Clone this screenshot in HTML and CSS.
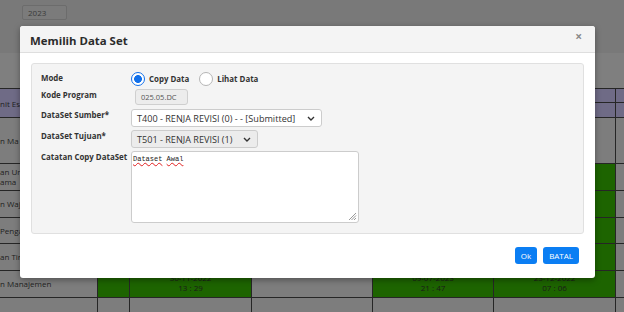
FILE: index.html
```html
<!DOCTYPE html>
<html>
<head>
<meta charset="utf-8">
<link rel="stylesheet" href="styles.css">
</head>
<body>
<div class="page">
  <div class="topbar"><div class="year">2023</div></div>
  <div class="grid">
    <div class="c hd span2">nit Es</div>
    <div class="c hd"></div><div class="c hd"></div><div class="c hd"></div><div class="c hd"></div><div class="c hd"></div><div class="c hd"></div>
    <div class="c hd"></div><div class="c hd"></div><div class="c hd"></div><div class="c hd"></div><div class="c hd"></div><div class="c hd"></div>

    <div class="c lbl">n Ma</div><div class="c"></div><div class="c"></div><div class="c"></div><div class="c"></div><div class="c"></div><div class="c"></div>
    <div class="c lbl two">an Um<br>ama</div><div class="c g"></div><div class="c g"></div><div class="c"></div><div class="c g"></div><div class="c g"></div><div class="c"></div>
    <div class="c lbl">n Waj</div><div class="c g"></div><div class="c g"></div><div class="c"></div><div class="c g"></div><div class="c g"></div><div class="c"></div>
    <div class="c lbl">Penga</div><div class="c g"></div><div class="c g"></div><div class="c"></div><div class="c g"></div><div class="c g"></div><div class="c"></div>
    <div class="c lbl">an Tin</div><div class="c g"></div><div class="c g"></div><div class="c"></div><div class="c g"></div><div class="c g"></div><div class="c"></div>
    <div class="c lbl">n Manajemen</div><div class="c g"></div><div class="c g dt">30-11-2022<br>13 : 29</div><div class="c"></div><div class="c g dt">09-07-2023<br>21 : 47</div><div class="c g dt">23-12-2022<br>07 : 06</div><div class="c"></div>
    <div class="c lbl"></div><div class="c"></div><div class="c"></div><div class="c"></div><div class="c"></div><div class="c"></div><div class="c"></div>
  </div>
</div>

<div class="modal">
  <div class="modal-header">
    <h4 class="title">Memilih Data Set</h4>
    <span class="close">×</span>
  </div>
  <div class="modal-body">
    <div class="panel">
      <div class="form">
        <div class="label">Mode</div>
        <div class="radios">
          <span class="radio on"></span><span class="rtext">Copy Data</span>
          <span class="radio off"></span><span class="rtext">Lihat Data</span>
        </div>

        <div class="label">Kode Program</div>
        <div><div class="kode">025.05.DC</div></div>

        <div class="label">DataSet Sumber*</div>
        <div><div class="select sumber"><span>T400 - RENJA REVISI (0) - - [Submitted]</span><svg class="chev" width="8" height="5" viewBox="0 0 8 5"><path d="M1 1 L4 4 L7 1" fill="none" stroke="#333" stroke-width="1.4"/></svg></div></div>

        <div class="label">DataSet Tujuan*</div>
        <div><div class="select tujuan"><span>T501 - RENJA REVISI (1)</span><svg class="chev" width="8" height="5" viewBox="0 0 8 5"><path d="M1 1 L4 4 L7 1" fill="none" stroke="#333" stroke-width="1.4"/></svg></div></div>

        <div class="label">Catatan Copy DataSet</div>
        <div>
          <div class="textarea">
            <span class="sp">Dataset</span> <span class="sp">Awal</span>
            <svg class="grip" width="9" height="9" viewBox="0 0 9 9"><path d="M8 1 L1 8 M8 3.5 L3.5 8 M8 6 L6 8" stroke="#999" stroke-width="1"/></svg>
          </div>
        </div>
      </div>
    </div>
  </div>
  <div class="modal-footer">
    <button class="btn">Ok</button>
    <button class="btn">BATAL</button>
  </div>
</div>
</body>
</html>
```
FILE: styles.css
```css
* { box-sizing: border-box; }
html, body { margin: 0; padding: 0; }
body {
  width: 624px;
  height: 312px;
  overflow: hidden;
  background: #7f7f7f;
  font-family: "Open Sans", "Liberation Sans", sans-serif;
  position: relative;
}
.page { display: flex; flex-direction: column; }
.topbar {
  height: 53px;
  background: #797979;
  padding: 5px 0 0 22px;
}
.year {
  width: 45px;
  height: 15px;
  border: 1px solid #6c6c6c;
  border-radius: 2px;
  background: #7b7b7b;
  font-size: 8px;
  line-height: 13px;
  color: #3a3a3a;
  padding-left: 5px;
}
.grid {
  margin-top: 35px;
  display: grid;
  grid-template-columns: 97px 31px 121px 120px 120px 121px 1fr;
  grid-template-rows: 13px 14px 45px 26px 26px 25px 26px 26px 26px;
  gap: 1px;
  background: #262626;
  border-top: 1px solid #262626;
}
.c {
  background-color: #7d7d7d;
  font-size: 8px;
  color: #1e1e1e;
  overflow: hidden;
  white-space: nowrap;
}
.c.hd { background-color: #6f6b86; }
.span2 { grid-row: span 2; display: flex; align-items: center; }
.lbl { display: flex; align-items: center; line-height: 10px; }
.c.g { background-color: #1d6400; }
.dt {
  text-align: center;
  line-height: 10px;
  padding-top: 2px;
  color: #1a1a1a;
}

/* modal */
.modal {
  position: absolute;
  left: 20px;
  top: 26px;
  width: 575px;
  height: 252px;
  background: #fff;
  border-radius: 3px;
  box-shadow: 0 2px 6px rgba(0,0,0,0.35);
  display: flex;
  flex-direction: column;
  overflow: hidden;
}
.modal-header {
  height: 27px;
  background: #f4f4f4;
  border-bottom: 1px solid #dedede;
  display: flex;
  align-items: center;
  justify-content: space-between;
  padding: 0 12px 0 10px;
}
.title {
  margin: 0;
  font-size: 11.4px;
  font-weight: 700;
  color: #2b2b2b;
  padding-top: 2px;
}
.close {
  font-size: 12px;
  font-weight: 700;
  color: #8a8a8a;
  line-height: 12px;
  margin-top: -4px;
  margin-right: 1px;
}
.modal-body {
  padding: 10px 11px 0 11px;
}
.panel {
  height: 171px;
  background: #f4f4f4;
  border: 1px solid #e0e0e0;
  border-radius: 3px;
  padding: 8px 10px 10px 9px;
}
.form {
  display: grid;
  grid-template-columns: 90px 1fr;
  grid-template-rows: 14px 17px 18px 18px 72px;
  row-gap: 3px;
}
.label {
  font-size: 7.9px;
  font-weight: 700;
  color: #333;
  line-height: 11px;
  padding-top: 1px;
  white-space: nowrap;
}
.radios {
  display: flex;
  align-items: center;
}
.radio {
  width: 14px;
  height: 14px;
  border-radius: 50%;
  display: inline-block;
  flex: none;
}
.radio.on {
  border: 1.5px solid #1270ea;
  background: radial-gradient(circle, #1270ea 0 3.6px, #fff 4.2px);
}
.radio.off {
  border: 1px solid #b5b5b5;
  background: #fff;
  margin-left: 10px;
}
.rtext {
  font-size: 7.9px;
  font-weight: 700;
  color: #333;
  margin-left: 4px;
}
.kode {
  margin-left: 4px;
  width: 53px;
  height: 16px;
  background: #ececec;
  border: 1px solid #cfcfcf;
  border-radius: 3px;
  font-size: 7.5px;
  line-height: 14px;
  color: #555;
  padding-left: 5px;
}
.select {
  height: 18px;
  border: 1px solid #cccccc;
  border-radius: 3px;
  display: flex;
  align-items: center;
  justify-content: space-between;
  padding: 0 6px 0 5px;
  font-size: 9.1px;
  color: #333;
  white-space: nowrap;
}
.select.sumber { width: 191px; background: #fff; }
.select.tujuan { width: 127px; background: #ececec; }
.chev { flex: none; }
.textarea {
  position: relative;
  width: 228px;
  height: 72px;
  background: #fff;
  border: 1px solid #cccccc;
  border-radius: 3px;
  font-family: "Liberation Mono", "DejaVu Sans Mono", monospace;
  font-size: 7px;
  line-height: 9px;
  color: #222;
  padding: 3px 1px;
}
.sp {
  text-decoration: underline wavy #e02020;
  text-decoration-thickness: 1px;
  text-underline-offset: 1px;
}
.grip {
  position: absolute;
  right: 1px;
  bottom: 1px;
}
.modal-footer {
  display: flex;
  justify-content: flex-end;
  gap: 6px;
  padding: 13px 16px 0 0;
}
.btn {
  height: 17px;
  border: none;
  border-radius: 3px;
  background: #0b7ef3;
  color: #fff;
  font-family: "Open Sans", "Liberation Sans", sans-serif;
  font-size: 8px;
  padding: 0 6px;
  line-height: 17px;
}
```
